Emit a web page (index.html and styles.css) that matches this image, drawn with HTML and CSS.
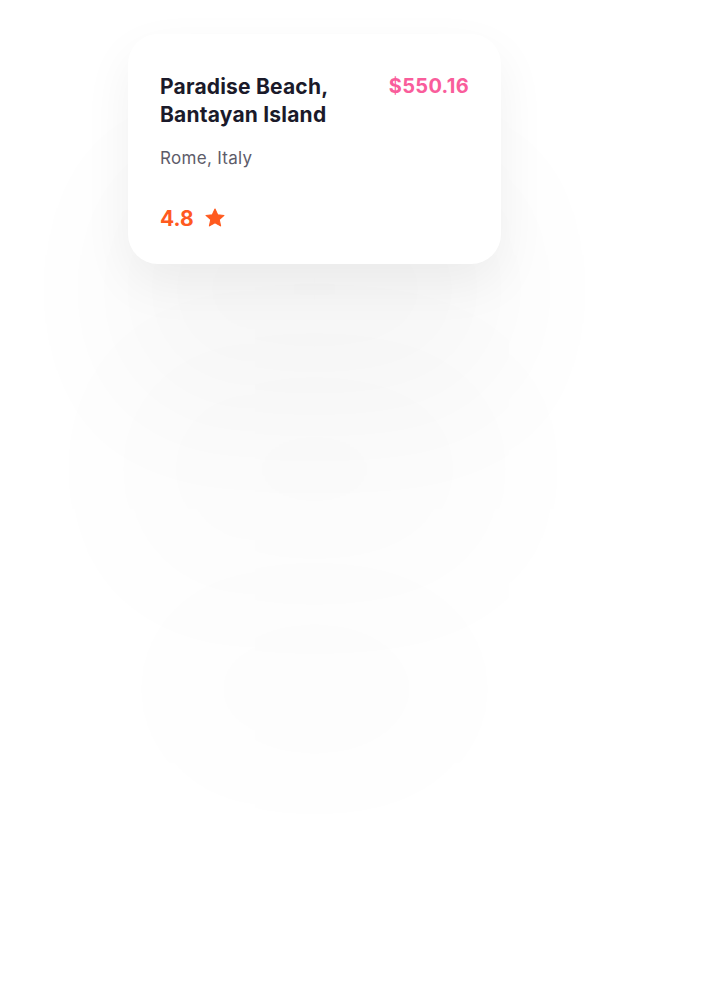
FILE: index.html
```html
<!DOCTYPE html>
<html lang="en">
<head>
<meta charset="utf-8">
<title>Paradise Beach</title>
<link rel="stylesheet" href="styles.css">
</head>
<body>
<main class="stage">
  <article class="card">
    <div class="card-head">
      <h2 class="title">Paradise Beach,<br>Bantayan Island</h2>
      <span class="price">$550.16</span>
    </div>
    <p class="location">Rome, Italy</p>
    <div class="rating">
      <span class="score">4.8</span>
      <svg class="star" viewBox="0 0 24 24" width="22" height="22" aria-hidden="true">
        <path d="M12 2.2l2.9 6.3 6.9.7-5.2 4.6 1.5 6.8L12 17.1l-6.1 3.5 1.5-6.8-5.2-4.6 6.9-.7z" fill="#ff5a1f" stroke="#ff5a1f" stroke-width="1.2" stroke-linejoin="round"/>
      </svg>
    </div>
  </article>
</main>
</body>
</html>
```
FILE: styles.css
```css
html, body {
  margin: 0;
  padding: 0;
  background: #ffffff;
}
body {
  font-family: "Inter", "Liberation Sans", sans-serif;
  width: 707px;
  height: 982px;
  overflow: hidden;
}
.stage {
  padding: 34px 0 0 128px;
}
.card {
  width: 373px;
  box-sizing: border-box;
  padding: 39px 32px 31px 32px;
  background: #ffffff;
  border-radius: 30px;
  box-shadow:
    0 20px 50px rgba(0, 0, 0, 0.06),
    0 140px 150px rgba(0, 0, 0, 0.035),
    0 320px 170px rgba(0, 0, 0, 0.02),
    0 540px 160px -40px rgba(0, 0, 0, 0.016);
}
.card-head {
  display: flex;
  justify-content: space-between;
  align-items: flex-start;
}
.title {
  margin: 0;
  font-size: 21px;
  line-height: 28px;
  font-weight: 700;
  color: #1b1a2a;
  letter-spacing: 0.2px;
}
.price {
  font-size: 20px;
  line-height: 28px;
  font-weight: 700;
  color: #f95d9b;
  letter-spacing: 0.3px;
  margin-top: -1px;
}
.location {
  margin: 17px 0 0 0;
  font-size: 17px;
  line-height: 24px;
  letter-spacing: 0.3px;
  color: #5d5c6a;
}
.rating {
  margin-top: 35px;
  display: flex;
  align-items: center;
  gap: 10px;
}
.score {
  font-size: 21px;
  line-height: 28px;
  font-weight: 700;
  color: #ff5a1f;
}
.star {
  display: block;
  margin-top: -2px;
}
```
